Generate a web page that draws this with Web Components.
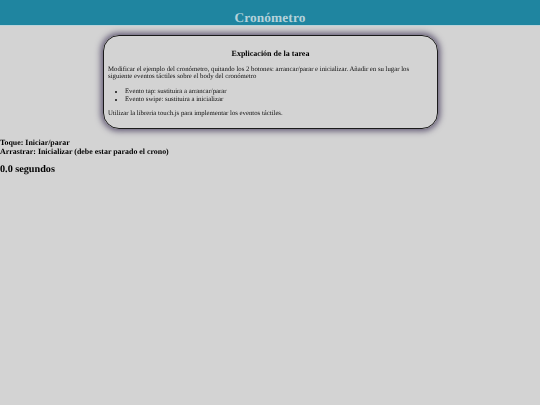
<!DOCTYPE html>
<html lang="es"><head><meta charset="utf-8"><title>Cronómetro</title>
<style>
html,body{margin:0;padding:0;background:#d3d3d3;height:100%;overflow:hidden}
body{font-family:"Liberation Serif","Times New Roman",serif;color:#000;text-rendering:geometricPrecision}
</style></head><body>
<crono-page>
<crono-header>Cronómetro</crono-header>
<task-box>
<span slot="title">Explicación de la tarea</span>
<p>Modificar el ejemplo del cronómetro, quitando los 2 botones: arrancar/parar e inicializar. Añadir en su lugar los siguiente eventos táctiles sobre el body del cronómetro</p>
<ul><li>Evento tap: sustituira a arrancar/parar</li><li>Evento swipe: sustituira a inicializar</li></ul>
<p>Utilizar la libreria touch.js para implementar los eventos táctiles.</p>
</task-box>
<crono-help><div>Toque: Iniciar/parar</div><div>Arrastrar: Inicializar (debe estar parado el crono)</div></crono-help>
<crono-time>0.0 segundos</crono-time>
</crono-page>
<script>
function def(name,css,html){customElements.define(name,class extends HTMLElement{constructor(){super();this.attachShadow({mode:"open"}).innerHTML="<style>"+css+"</style>"+html;}});}
def("crono-page",":host{display:block;height:405px;filter:blur(.3px)}","<slot></slot>");
def("crono-header",":host{display:block;background:#1f85a0;height:24.5px;border-bottom:1px solid #b9d3da;text-align:center;color:#b5d2da;font-weight:bold;font-size:13.33px;line-height:35px;overflow:hidden;letter-spacing:.1px}","<slot></slot>");
customElements.define("task-box",class extends HTMLElement{constructor(){super();this.attachShadow({mode:"open"}).innerHTML=`<style>
:host{display:block;box-sizing:border-box;width:335px;height:94px;margin:9.5px auto 0;padding:12.5px 12px 0 4px;border:1.5px solid #1a1a1a;border-radius:16px;box-shadow:0 0 6px 2px #5d5470;font-size:6.75px;line-height:7.8px;color:#111;position:relative;left:.5px}
.t{text-align:center;font-weight:bold;font-size:8px;line-height:9px;margin:0 -8px 8px 0;color:#000}
::slotted(p){margin:0 0 6.7px}
::slotted(ul){margin:0 0 6.7px;padding:0 0 0 17px}
</style><div class="t"><slot name="title"></slot></div><slot></slot>`;}});
def("crono-help",":host{display:block;margin-top:8.5px;font-weight:bold;font-size:7.9px;line-height:9px}","<slot></slot>");
def("crono-time",":host{display:block;margin-top:8.5px;font-weight:bold;font-size:10.2px;line-height:12px}","<slot></slot>");
</script>
</body></html>
